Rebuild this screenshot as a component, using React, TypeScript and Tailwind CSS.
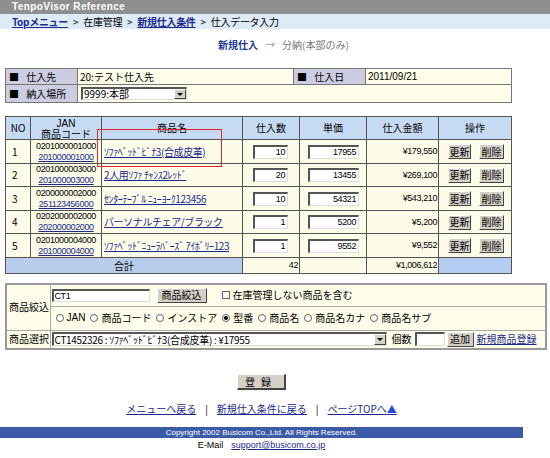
const rows = [
  { no: 1, jan: "0201000001000", code: "201000001000", name: "ｿﾌｧﾍﾞｯﾄﾞﾋﾞﾅ3(合成皮革)", qty: "10", price: "17955", amount: "¥179,550", h: "h-[24px]" },
  { no: 2, jan: "0201000003000", code: "201000003000", name: "2人用ｿﾌｧ ﾁｬﾝｽ2ﾚｯﾄﾞ", qty: "20", price: "13455", amount: "¥269,100", h: "h-[23px]" },
  { no: 3, jan: "0200000002000", code: "251123456000", name: "ｾﾝﾀｰﾃｰﾌﾞﾙ ﾆｭｰﾖｰｸ123456", qty: "10", price: "54321", amount: "¥543,210", h: "h-[24px]" },
  { no: 4, jan: "0202000002000", code: "202000002000", name: "パーソナルチェア/ブラック", qty: "1", price: "5200", amount: "¥5,200", h: "h-[23px]" },
  { no: 5, jan: "0201000004000", code: "201000004000", name: "ｿﾌｧﾍﾞｯﾄﾞﾆｭｰﾗﾊﾞｰｽﾞ ｱｲﾎﾞﾘｰ123", qty: "1", price: "9552", amount: "¥9,552", h: "h-[24px]" },
];

const radios = ["JAN", "商品コード", "インストア", "型番", "商品名", "商品名カナ", "商品名サブ"];

const num = "font-['Liberation_Sans',sans-serif] text-[9px] tracking-[-0.4px]";
const field =
  "border-t-2 border-l-2 border-r border-b border-t-[#555] border-l-[#555] border-r-[#ddd] border-b-[#ddd] bg-white";
const btn =
  "border border-t-white border-l-white border-r-[#444] border-b-[#444] bg-[#d4d0c8] text-[10px] leading-none";

function Radio({ checked }: { checked?: boolean }) {
  return (
    <span className="mr-[3px] inline-flex h-[8px] w-[8px] items-center justify-center rounded-full border border-[#666] bg-white align-middle">
      {checked ? <span className="h-[4px] w-[4px] rounded-full bg-black" /> : null}
    </span>
  );
}

function Arrow() {
  return (
    <span className="flex h-full w-[12px] items-center justify-center border border-t-white border-l-white border-r-[#444] border-b-[#444] bg-[#d4d0c8]">
      <span className="h-0 w-0 border-x-[3px] border-t-[3px] border-x-transparent border-t-black" />
    </span>
  );
}

export default function App() {
  return (
    <div className="relative min-h-[458px] w-[550px] bg-white font-['Noto_Sans_CJK_JP',sans-serif] text-[10px] leading-none text-black">
      <div className="h-[14px] bg-[#8f8f8f] pl-[12px] font-['Liberation_Sans',sans-serif] text-[10px] font-bold leading-[14px] tracking-[0.4px] text-white">
        TenpoVisor Reference
      </div>
      <div className="flex h-[15px] items-center gap-[5px] bg-[#deeaf6] pl-[12px] tracking-[-0.3px]">
        <a className="font-bold text-[#1b2a8f] underline">Topメニュー</a>
        <span>&gt;</span>
        <span>在庫管理</span>
        <span>&gt;</span>
        <a className="font-bold text-[#1b2a8f] underline">新規仕入条件</a>
        <span>&gt;</span>
        <span>仕入データ入力</span>
      </div>

      <div className="h-[39px] pl-[218px] pt-[11px]">
        <span className="font-bold text-[#1f3a93]">新規仕入</span>
        <span className="mx-[7px] text-[#999]">→</span>
        <span className="text-[#777]">分納(本部のみ)</span>
      </div>

      <table className="ml-[5px] w-[506px] table-fixed border-collapse border border-[#333]">
        <colgroup>
          <col className="w-[72px]" />
          <col className="w-[216px]" />
          <col className="w-[72px]" />
          <col className="w-[146px]" />
        </colgroup>
        <tbody>
          <tr className="h-[16px]">
            <td className="border border-[#777] bg-[#cdcde2] pl-[3px]">■ <span className="ml-[5px]">仕入先</span></td>
            <td className="border border-[#777] bg-[#fdfde9] pl-[2px]">20:テスト仕入先</td>
            <td className="border border-[#777] bg-[#cdcde2] pl-[3px]">■ <span className="ml-[5px]">仕入日</span></td>
            <td className="border border-[#777] bg-[#fdfde9] pl-[2px] font-['Liberation_Sans',sans-serif] text-[10px]">2011/09/21</td>
          </tr>
          <tr className="h-[18px]">
            <td className="border border-[#777] bg-[#cdcde2] pl-[3px]">■ <span className="ml-[5px]">納入場所</span></td>
            <td colSpan={3} className="border border-[#777] bg-[#fdfde9] pl-[3px]">
              <div className={`flex h-[13px] w-[106px] items-center ${field}`}>
                <span className="flex-1 pl-[1px]">9999:本部</span>
                <Arrow />
              </div>
            </td>
          </tr>
        </tbody>
      </table>

      <table className="ml-[5px] mt-[13px] w-[506px] table-fixed border-collapse border border-[#222]">
        <colgroup>
          <col className="w-[25px]" />
          <col className="w-[71px]" />
          <col className="w-[141px]" />
          <col className="w-[57px]" />
          <col className="w-[67px]" />
          <col className="w-[72px]" />
          <col className="w-[73px]" />
        </colgroup>
        <thead>
          <tr className="h-[23px] bg-[#c7daf3] text-center">
            <th className="border border-[#555] font-normal">NO</th>
            <th className="border border-[#555] font-normal leading-[10px]">
              <span className="font-['Liberation_Sans',sans-serif]">JAN</span>
              <br />
              商品コード
            </th>
            <th className="border border-[#555] font-normal">商品名</th>
            <th className="border border-[#555] font-normal">仕入数</th>
            <th className="border border-[#555] font-normal">単価</th>
            <th className="border border-[#555] font-normal">仕入金額</th>
            <th className="border border-[#555] font-normal">操作</th>
          </tr>
        </thead>
        <tbody className="bg-[#fcfce9]">
          {rows.map((r) => (
            <tr key={r.no} className={r.h}>
              <td className="border border-[#555] pl-[6px]">{r.no}</td>
              <td className={`border border-[#555] text-center leading-[11px] ${num}`}>
                {r.jan}
                <br />
                <a className="text-[#1b2a8f] underline">{r.code}</a>
              </td>
              <td className="border border-[#555] pl-[2px]">
                <a className="whitespace-nowrap text-[#1b2a8f] underline tracking-[-0.4px]">{r.name}</a>
              </td>
              <td className="border border-[#555] pl-[10px]">
                <div className={`h-[14px] w-[35px] pr-[2px] text-right leading-[11px] ${field} ${num}`}>{r.qty}</div>
              </td>
              <td className="border border-[#555] pl-[8px]">
                <div className={`h-[14px] w-[51px] pr-[2px] text-right leading-[11px] ${field} ${num}`}>{r.price}</div>
              </td>
              <td className={`border border-[#555] pr-[1px] text-right ${num}`}>{r.amount}</td>
              <td className="border border-[#555] pl-[9px]">
                <div className="flex gap-[8px]">
                  <button className={`h-[15px] w-[23px] ${btn}`}>更新</button>
                  <button className={`h-[15px] w-[25px] ${btn}`}>削除</button>
                </div>
              </td>
            </tr>
          ))}
          <tr className="h-[16px]">
            <td colSpan={3} className="border border-[#555] bg-[#b8cdec] text-center">合計</td>
            <td className={`border border-[#555] pr-[1px] text-right ${num}`}>42</td>
            <td className="border border-[#555]" />
            <td className={`border border-[#555] pr-[1px] text-right ${num}`}>¥1,006,612</td>
            <td className="border border-[#555] bg-[#b5cdf0]" />
          </tr>
        </tbody>
      </table>

      <table className="ml-[5px] mt-[9px] w-[540px] table-fixed border-collapse border-2 border-[#999] bg-[#fdfdea]">
        <colgroup>
          <col className="w-[44px]" />
          <col className="w-[496px]" />
        </colgroup>
        <tbody>
          <tr className="h-[22px]">
            <td rowSpan={2} className="border border-[#aaa] pl-[2px]">商品絞込</td>
            <td className="border border-[#aaa] pl-[1px]">
              <div className="flex items-center">
                <div className={`h-[13px] w-[98px] pl-[1px] leading-[10px] ${field} ${num}`}>CT1</div>
                <button className={`ml-[7px] h-[15px] w-[50px] ${btn}`}>商品絞込</button>
                <span className="ml-[15px] mr-[3px] h-[8px] w-[8px] border border-[#666] bg-white" />
                <span>在庫管理しない商品を含む</span>
              </div>
            </td>
          </tr>
          <tr className="h-[24px]">
            <td className="border border-[#aaa] pl-[5px]">
              <div className="flex items-center gap-[5px]">
                {radios.map((r) => (
                  <span key={r} className="flex items-center">
                    <Radio checked={r === "型番"} />
                    <span className={r === "JAN" ? "font-['Liberation_Sans',sans-serif]" : ""}>{r}</span>
                  </span>
                ))}
              </div>
            </td>
          </tr>
          <tr className="h-[19px]">
            <td className="border border-[#aaa] pl-[2px]">商品選択</td>
            <td className="border border-[#aaa] pl-[1px]">
              <div className="flex items-center">
                <div className={`flex h-[14px] w-[335px] items-center ${field}`}>
                  <span className="flex-1 whitespace-nowrap pl-[1px] tracking-[-0.3px]">CT1452326 : ｿﾌｧﾍﾞｯﾄﾞﾋﾞﾅ3(合成皮革) : ¥17955</span>
                  <Arrow />
                </div>
                <span className="ml-[5px]">個数</span>
                <div className={`ml-[3px] h-[14px] w-[30px] ${field}`} />
                <button className={`ml-[2px] h-[15px] w-[27px] ${btn}`}>追加</button>
                <a className="ml-[3px] text-[#1b2a8f] underline">新規商品登録</a>
              </div>
            </td>
          </tr>
        </tbody>
      </table>

      <div className="w-[523px]">
        <div className="mt-[24px] flex justify-center">
          <button className={`h-[16px] w-[49px] tracking-[6px] ${btn} border-r-2 border-b-2`}>登録</button>
        </div>
        <div className="mt-[14px] flex justify-center gap-[9px] text-[10px]">
          <a className="text-[#1b2a8f] underline">メニューへ戻る</a>
          <span>|</span>
          <a className="text-[#1b2a8f] underline">新規仕入条件に戻る</a>
          <span>|</span>
          <a className="text-[#1b2a8f] underline">
            ページTOPへ<span className="text-[#2a4bd0]">▲</span>
          </a>
        </div>
        <div className="mt-[13px] h-[11px] bg-[#3c5ba7] text-center font-['Liberation_Sans',sans-serif] text-[8px] leading-[11px] text-white">
          Copyright 2002 Busicom Co.,Ltd. All Rights Reserved.
        </div>
        <div className="mt-[3px] text-center font-['Liberation_Sans',sans-serif] text-[9px]">
          E-Mail<span className="ml-[8px] text-[#1b2a8f] underline">support@busicom.co.jp</span>
        </div>
      </div>

      <div className="absolute left-[97px] top-[129px] h-[38px] w-[125px] border border-[#e02828]" />
    </div>
  );
}
